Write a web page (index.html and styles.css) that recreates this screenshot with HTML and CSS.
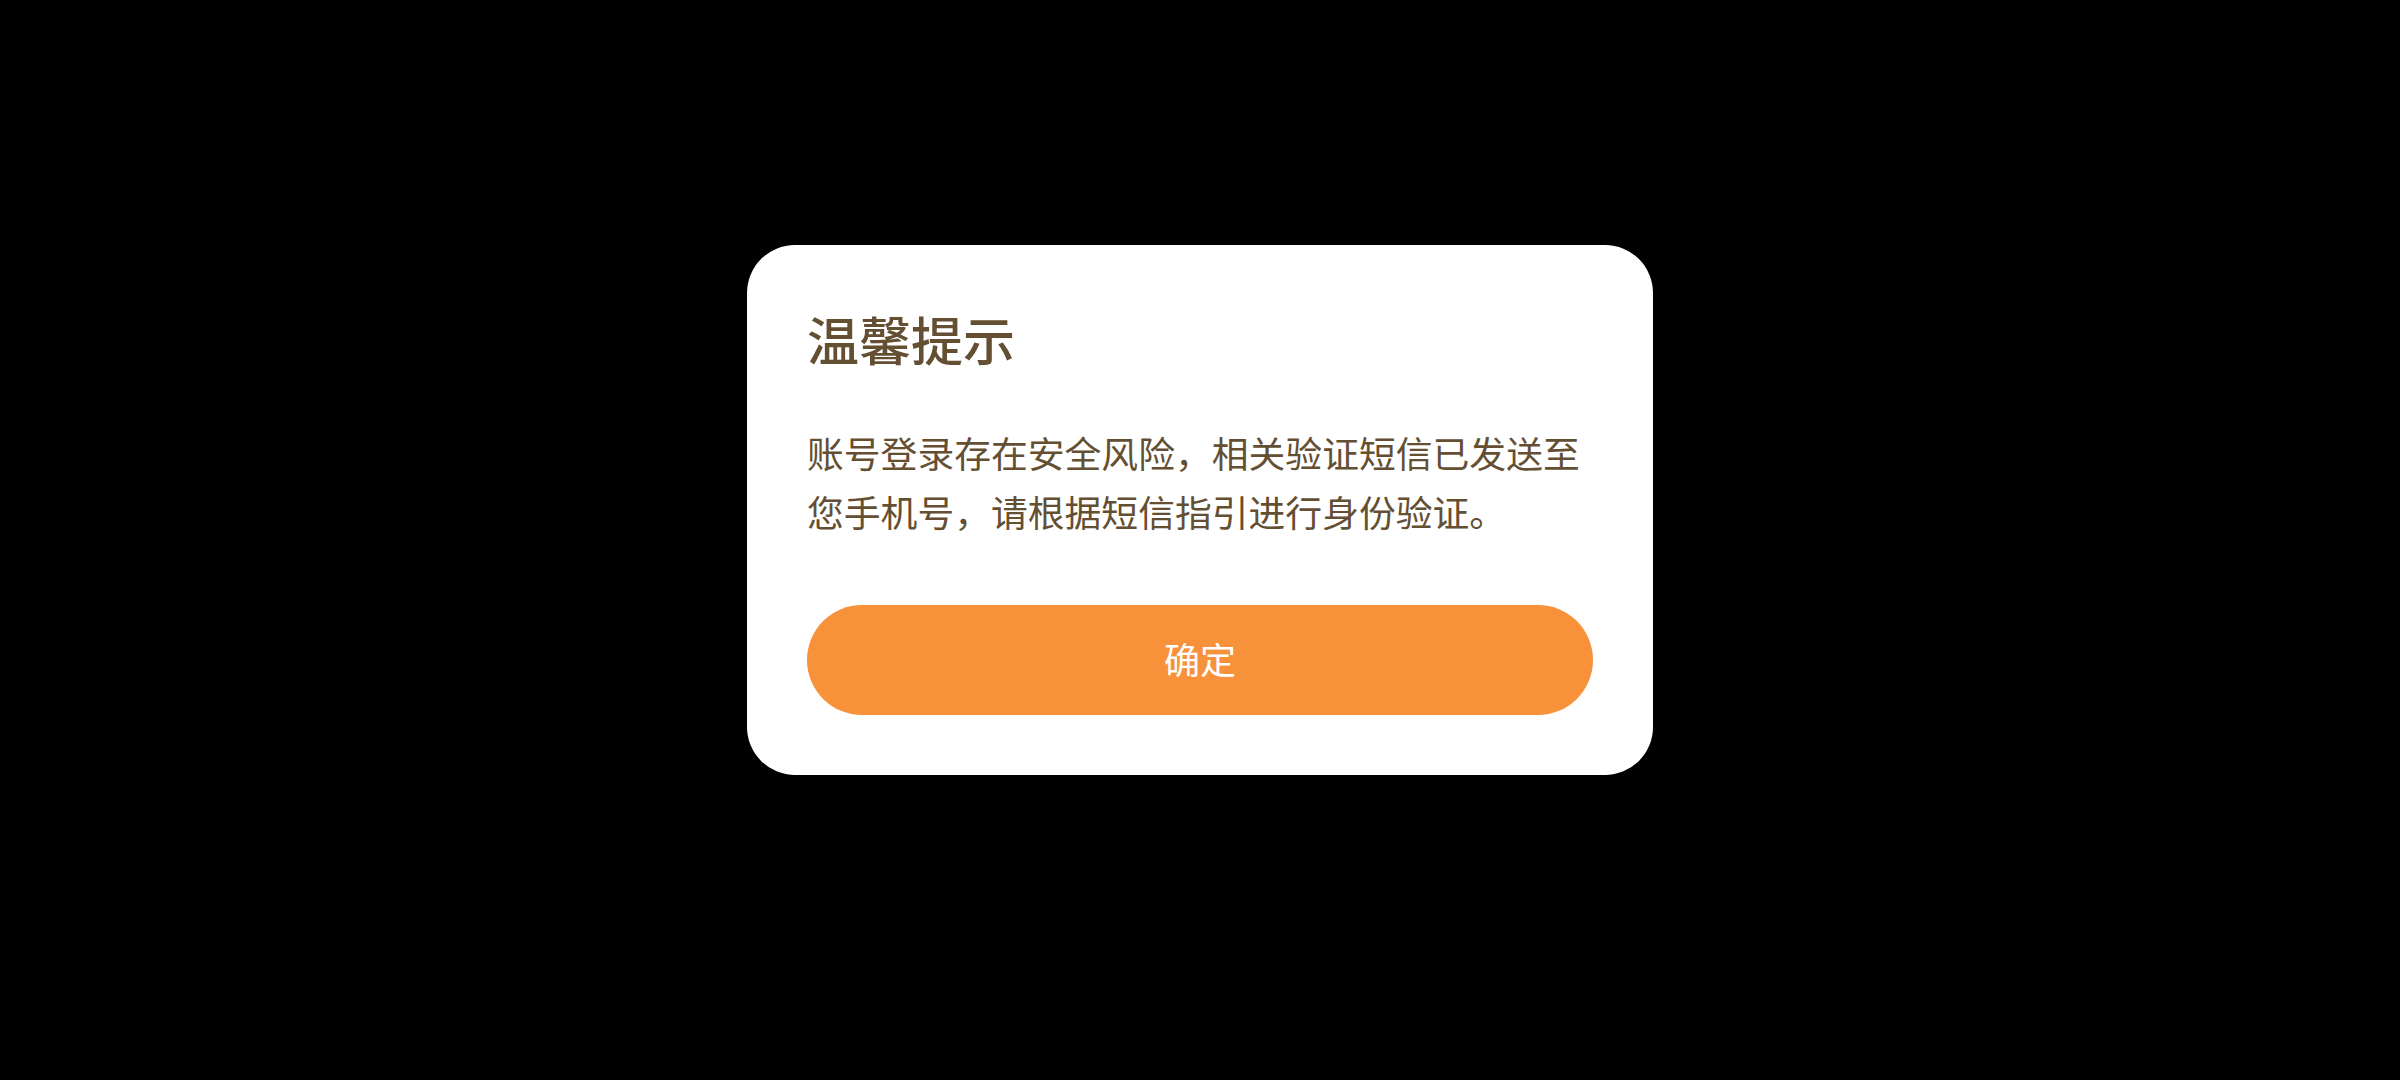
FILE: index.html
```html
<!DOCTYPE html>
<html lang="zh-CN">
<head>
<meta charset="utf-8">
<title>温馨提示</title>
<link rel="stylesheet" href="styles.css">
</head>
<body>
<div class="dialog">
  <h1 class="dialog-title">温馨提示</h1>
  <p class="dialog-text">账号登录存在安全风险，相关验证短信已发送至您手机号，请根据短信指引进行身份验证。</p>
  <button class="dialog-btn">确定</button>
</div>
</body>
</html>
```
FILE: styles.css
```css
html, body {
  margin: 0;
  padding: 0;
  background: #000;
}
body {
  width: 2400px;
  height: 1080px;
  display: flex;
  justify-content: center;
  align-items: flex-start;
  padding-top: 245px;
  box-sizing: border-box;
  font-family: "Noto Sans CJK SC", "Noto Sans", sans-serif;
}
.dialog {
  width: 906px;
  box-sizing: border-box;
  background: #fff;
  border-radius: 48px;
  padding: 63px 60px 60px;
  display: flex;
  flex-direction: column;
}
.dialog-title {
  margin: 0;
  font-size: 52px;
  line-height: 62px;
  font-weight: 500;
  color: #644f33;
}
.dialog-text {
  margin: 53px 0 0;
  font-size: 36.8px;
  line-height: 59px;
  font-weight: 400;
  color: #644f33;
}
.dialog-btn {
  margin-top: 64px;
  height: 110px;
  border: none;
  border-radius: 55px;
  background: #f7923a;
  color: #fff;
  font-family: inherit;
  font-size: 36px;
  font-weight: 400;
  padding: 0 0 5px;
}
```
